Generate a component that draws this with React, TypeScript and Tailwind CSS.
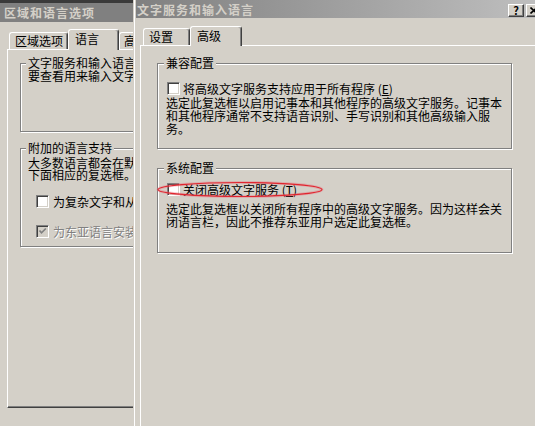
import React from "react";

// 经典 Windows 2000 灰色对话框（两个窗口叠放）
const etched = "border border-[#808080] shadow-[inset_1px_1px_0_#fff,1px_1px_0_#fff]";

function Check({ checked = false, disabled = false }: { checked?: boolean; disabled?: boolean }) {
  return (
    <span
      className={`relative box-border inline-block h-[13px] w-[13px] shrink-0 border border-t-[#808080] border-l-[#808080] border-r-white border-b-white shadow-[inset_1px_1px_0_#404040,inset_-1px_-1px_0_#d4d0c8] ${
        disabled ? "bg-[#d4d0c8]" : "bg-white"
      }`}
    >
      {checked && (
        <svg viewBox="0 0 11 11" className="absolute left-0 top-0 h-[11px] w-[11px]">
          <path d="M2.5 4.5 L4.5 6.8 L8.8 2.5" fill="none" stroke={disabled ? "#808080" : "#000"} strokeWidth="1.7" />
        </svg>
      )}
    </span>
  );
}

function Tab({ label, selected, w, pl }: { label: string; selected?: boolean; w: string; pl: string }) {
  if (selected) {
    return (
      <div
        className={`relative z-10 -mb-px box-border border-l border-t border-r border-white border-r-[#404040] bg-[#d4d0c8] pt-px leading-[15px] shadow-[inset_-1px_0_0_#808080] rounded-t-[3px] ${w} ${pl}`}
      >
        {label}
      </div>
    );
  }
  return (
    <div
      className={`box-border h-[17px] border-l border-t border-r border-white border-r-[#404040] leading-[15px] shadow-[inset_-1px_0_0_#808080] rounded-t-[3px] ${w} ${pl}`}
    >
      {label}
    </div>
  );
}

function LeftWindow() {
  return (
    <div className="h-full w-[133px] shrink-0 overflow-hidden">
      <div className="flex h-full w-[420px] flex-col">
        <div className="h-[3px] bg-[#3a3a3a]" />
        <div className="flex h-[19px] items-center bg-[#808080] pl-[4px] text-[12px] font-bold tracking-[1px] text-[#d4d0c8]">
          区域和语言选项
        </div>
        <div className="pl-[7px] pt-[7px]">
          <div className="flex items-end pl-[2px]">
            <Tab label="区域选项" w="w-[59px]" pl="pl-[5px]" />
            <Tab label="语言" selected w="w-[51px] h-[21px]" pl="pl-[6px]" />
            <Tab label="高级" w="w-[60px]" pl="pl-[4px]" />
          </div>
          <div className="box-border h-[359px] border-l border-t border-b border-white border-b-[#404040] pl-[12px] pt-[7px] shadow-[inset_0_-1px_0_#808080]">
            <fieldset className={`w-[380px] pb-[49px] pl-[7px] ${etched}`}>
              <legend className="-ml-[2px] bg-[#d4d0c8] px-[2px] leading-[12px]">文字服务和输入语言</legend>
              <p className="leading-[13px]">要查看用来输入文字的语言和方法，请单击“详细信息”。</p>
            </fieldset>
            <fieldset className={`mt-[10px] w-[380px] pb-[8px] pl-[7px] ${etched}`}>
              <legend className="-ml-[2px] bg-[#d4d0c8] px-[2px] leading-[12px]">附加的语言支持</legend>
              <p className="mt-[3px] leading-[12px]">
                大多数语言都会在默认情况下安装。若要安装其他语言，
                <br />
                下面相应的复选框。
              </p>
              <div className="ml-[8px] mt-[14px] flex h-[13px] items-center gap-[4px]">
                <Check />
                <span className="whitespace-nowrap leading-[13px]">
                  为复杂文字和从右到左的语言安装文件(包括泰语)(<u>T</u>)
                </span>
              </div>
              <div className="ml-[8px] mt-[17px] flex h-[13px] items-center gap-[4px]">
                <Check checked disabled />
                <span className="whitespace-nowrap leading-[13px] text-[#808080] [text-shadow:1px_1px_0_#fff]">
                  为东亚语言安装文件(<u>E</u>)
                </span>
              </div>
            </fieldset>
          </div>
        </div>
      </div>
    </div>
  );
}

function RightWindow() {
  return (
    <div className="ml-px box-border flex h-full w-[412px] shrink-0 flex-col border-l border-r border-white border-r-[#404040]">
      <div className="mx-px flex h-[18px] items-start bg-gradient-to-r from-[#808080] to-[#c0c0c0] pr-[2px]">
        <span className="pl-px pt-[3px] text-[12px] font-bold leading-[14px] tracking-[1px] text-[#d4d0c8]">
          文字服务和输入语言
        </span>
        <div className="ml-auto mt-[4px] flex gap-[2px]">
          <div className="box-border flex h-[13px] w-[16px] items-center justify-center border border-white border-r-[#404040] border-b-[#404040] bg-[#d4d0c8] text-[11px] font-bold leading-none text-black shadow-[inset_-1px_-1px_0_#808080]">
            ?
          </div>
          <div className="box-border flex h-[13px] w-[16px] items-center justify-center border border-white border-r-[#404040] border-b-[#404040] bg-[#d4d0c8] shadow-[inset_-1px_-1px_0_#808080]">
            <svg viewBox="0 0 8 7" className="h-[7px] w-[8px]">
              <path d="M0.5 0.5 L7 6.5 M7 0.5 L0.5 6.5" stroke="#000" strokeWidth="1.6" />
            </svg>
          </div>
        </div>
      </div>
      <div className="flex flex-1 flex-col pl-[5px] pr-[5px] pt-[8px]">
        <div className="flex items-end pl-[3px]">
          <Tab label="设置" w="w-[47px]" pl="pl-[5px]" />
          <Tab label="高级" selected w="w-[52px] h-[20px]" pl="pl-[6px]" />
        </div>
        <div className="flex-1 border-l border-t border-white pl-[16px] pt-[11px]">
          <fieldset className={`w-[355px] pb-[13px] pl-[8px] ${etched}`}>
            <legend className="-ml-[2px] bg-[#d4d0c8] px-[2px] leading-[12px]">兼容配置</legend>
            <div className="ml-px mt-[13px] flex h-[13px] items-center gap-[3px]">
              <Check />
              <span className="whitespace-nowrap leading-[13px]">
                将高级文字服务支持应用于所有程序 (<u>E</u>)
              </span>
            </div>
            <p className="mt-px leading-[13px]">
              选定此复选框以启用记事本和其他程序的高级文字服务。记事本
              <br />
              和其他程序通常不支持语音识别、手写识别和其他高级输入服
              <br />
              务。
            </p>
          </fieldset>
          <fieldset className={`mt-[13px] w-[355px] pb-[24px] pl-[8px] ${etched}`}>
            <legend className="-ml-[2px] bg-[#d4d0c8] px-[2px] leading-[12px]">系统配置</legend>
            <div className="ml-px mt-[9px] flex h-[13px] items-center gap-[3px]">
              <Check />
              <span className="whitespace-nowrap leading-[13px]">
                关闭高级文字服务 (<u>T</u>)
              </span>
            </div>
            <p className="mt-[6px] leading-[13px]">
              选定此复选框以关闭所有程序中的高级文字服务。因为这样会关
              <br />
              闭语言栏，因此不推荐东亚用户选定此复选框。
            </p>
          </fieldset>
        </div>
      </div>
    </div>
  );
}

export default function App() {
  return (
    <div className="relative flex h-[426px] w-[535px] overflow-hidden bg-[#d4d0c8] font-['Noto_Sans_CJK_SC','Liberation_Sans',sans-serif] text-[12px] text-black">
      <LeftWindow />
      <RightWindow />
      {/* 红色圈注 */}
      <svg className="pointer-events-none absolute left-[154px] top-[179px] h-[22px] w-[172px]" viewBox="0 0 172 22">
        <ellipse cx="86" cy="10.5" rx="82" ry="7" fill="none" stroke="rgba(235,110,120,0.35)" strokeWidth="3" />
        <ellipse cx="86" cy="10.5" rx="82" ry="7" fill="none" stroke="#e0252f" strokeWidth="1.2" />
      </svg>
    </div>
  );
}
